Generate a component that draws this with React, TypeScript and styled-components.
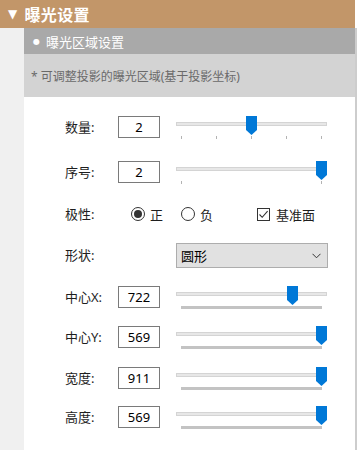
import React from "react";
import styled, {createGlobalStyle} from "styled-components";

type TickKind = "five" | "ends" | "dense"

type SliderProps = {
    value: number
    max: number
    min?: number
    ticks: TickKind
}

const GlobalStyle = createGlobalStyle`
  html, body {
    margin: 0;
    padding: 0;
    background: #fff;
  }
  body {
    font-family: "Noto Sans", "Noto Sans CJK SC", sans-serif;
  }
`

const TRACK_RUN = 140

const tickPositions = (kind: TickKind) => {
    if (kind === "five") return [0, 35, 70, 105, 140]
    if (kind === "ends") return [0, 140]
    return []
}

const Slider = ({value, min = 0, max, ticks}: SliderProps) => {
    const frac = (value - min) / (max - min)
    return (
        <SliderBox>
            <Track/>
            <Thumb style={{left: `${Math.round(frac * TRACK_RUN)}px`}}>
                <svg width="11" height="19" viewBox="0 0 11 19">
                    <path d="M0 0 H11 V14 L5.5 19 L0 14 Z" fill="#0078d7"/>
                </svg>
            </Thumb>
            {ticks === "dense"
                ? <TickBar/>
                : tickPositions(ticks).map(x => <Tick key={x} style={{left: `${x + 5}px`}}/>)}
        </SliderBox>
    )
}

const NumberRow = ({label, value, height, slider}: {
    label: string
    value: number
    height: number
    slider: SliderProps
}) => (
    <Row $height={height}>
        <Label>{label}</Label>
        <NumBox value={String(value)} readOnly/>
        <Slider {...slider}/>
    </Row>
)

export default function App() {
    return (
        <Page>
            <GlobalStyle/>
            <Header>
                <Triangle>▼</Triangle>
                曝光设置
            </Header>
            <Body>
                <Gutter/>
                <Panel>
                    <SubHeader>
                        <Bullet>●</Bullet>
                        曝光区域设置
                    </SubHeader>
                    <Note>* 可调整投影的曝光区域(基于投影坐标)</Note>
                    <Content>
                        <NumberRow label="数量:" value={2} height={45}
                                   slider={{value: 2, min: 0, max: 4, ticks: "five"}}/>
                        <NumberRow label="序号:" value={2} height={42}
                                   slider={{value: 2, min: 1, max: 2, ticks: "ends"}}/>
                        <Row $height={40}>
                            <Label>极性:</Label>
                            <Option $offset={13}>
                                <Radio $checked/>
                                正
                            </Option>
                            <Option $offset={18}>
                                <Radio $checked={false}/>
                                负
                            </Option>
                            <Option $offset={44}>
                                <Check>
                                    <svg width="11" height="11" viewBox="0 0 11 11">
                                        <path d="M1.5 5.5 L4.2 8.3 L9.6 2.2" fill="none" stroke="#333" strokeWidth="1.1"/>
                                    </svg>
                                </Check>
                                基准面
                            </Option>
                        </Row>
                        <Row $height={43}>
                            <Label $tall>形状:</Label>
                            <Select>
                                圆形
                                <svg width="9" height="6" viewBox="0 0 9 6">
                                    <path d="M0.5 0.8 L4.5 4.8 L8.5 0.8" fill="none" stroke="#333" strokeWidth="1"/>
                                </svg>
                            </Select>
                        </Row>
                        <NumberRow label="中心X:" value={722} height={40}
                                   slider={{value: 722, max: 911, ticks: "dense"}}/>
                        <NumberRow label="中心Y:" value={569} height={41}
                                   slider={{value: 569, max: 569, ticks: "dense"}}/>
                        <NumberRow label="宽度:" value={911} height={39}
                                   slider={{value: 911, max: 911, ticks: "dense"}}/>
                        <NumberRow label="高度:" value={569} height={39}
                                   slider={{value: 569, max: 569, ticks: "dense"}}/>
                    </Content>
                </Panel>
            </Body>
        </Page>
    )
}

const Page = styled.div`
  width: 357px;
  min-height: 100vh;
  display: flex;
  flex-direction: column;
`
const Header = styled.div`
  width: 355px;
  height: 28px;
  box-sizing: border-box;
  padding-left: 8px;
  display: flex;
  align-items: center;
  background: #c29669;
  color: #fff;
  font-family: "Noto Sans CJK SC", sans-serif;
  font-size: 16px;
  font-weight: 700;
  letter-spacing: 0.3px;
`
const Triangle = styled.span`
  font-family: "DejaVu Sans", sans-serif;
  font-size: 12px;
  margin-right: 7px;
`
const Body = styled.div`
  flex: 1;
  display: flex;
`
const Gutter = styled.div`
  width: 24px;
  background: #f0f0f0;
`
const Panel = styled.div`
  flex: 1;
  border-right: 2px solid #cdcdcd;
  background: #fff;
`
const SubHeader = styled.div`
  height: 26px;
  box-sizing: border-box;
  padding-left: 9px;
  display: flex;
  align-items: center;
  background: #a9a9a9;
  color: #fff;
  font-family: "Noto Sans CJK SC", sans-serif;
  font-size: 13px;
`
const Bullet = styled.span`
  font-family: "DejaVu Sans", sans-serif;
  font-size: 8px;
  margin-right: 6px;
`
const Note = styled.div`
  height: 43px;
  box-sizing: border-box;
  padding-left: 7px;
  display: flex;
  align-items: center;
  background: #d3d3d3;
  color: #6a6a6a;
  font-family: "Noto Sans", "Noto Sans CJK SC", sans-serif;
  font-size: 12px;
`
const Content = styled.div`
  padding: 19px 0 0 41px;
  display: flex;
  flex-direction: column;
`
const Row = styled.div<{ $height: number }>`
  height: ${p => p.$height}px;
  display: flex;
  align-items: flex-start;
`
const Label = styled.div<{ $tall?: boolean }>`
  width: 53px;
  line-height: ${p => p.$tall ? 25 : 22}px;
  font-family: "Noto Sans", "Noto Sans CJK SC", sans-serif;
  font-size: 13px;
  color: #1e1e1e;
`
const NumBox = styled.input`
  width: 42px;
  height: 22px;
  box-sizing: border-box;
  margin: 0 16px 0 0;
  padding: 0;
  border: 1px solid #7a7a7a;
  border-radius: 0;
  outline: none;
  text-align: center;
  font-family: "Noto Sans", sans-serif;
  font-size: 13px;
  color: #000;
  background: #fff;
`
const SliderBox = styled.div`
  position: relative;
  width: 151px;
  height: 24px;
`
const Track = styled.div`
  position: absolute;
  top: 6px;
  left: 0;
  width: 151px;
  height: 4px;
  box-sizing: border-box;
  background: #e7e7e7;
  border: 1px solid #d4d4d4;
`
const Thumb = styled.div`
  position: absolute;
  top: 0;
  width: 11px;
  height: 19px;
  line-height: 0;
`
const Tick = styled.div`
  position: absolute;
  top: 20px;
  width: 1px;
  height: 3px;
  background: #b3b3b3;
`
const TickBar = styled.div`
  position: absolute;
  top: 20px;
  left: 5px;
  width: 141px;
  height: 3px;
  background: #c3c3c3;
`
const Option = styled.div<{ $offset: number }>`
  margin-left: ${p => p.$offset}px;
  height: 22px;
  display: flex;
  align-items: center;
  gap: 5px;
  font-family: "Noto Sans CJK SC", sans-serif;
  font-size: 13px;
  color: #1e1e1e;
`
const Radio = styled.span<{ $checked: boolean }>`
  width: 14px;
  height: 14px;
  box-sizing: border-box;
  border: 1px solid #333;
  border-radius: 50%;
  display: flex;
  align-items: center;
  justify-content: center;

  &::after {
    content: "";
    display: ${p => p.$checked ? "block" : "none"};
    width: 8px;
    height: 8px;
    border-radius: 50%;
    background: #333;
  }
`
const Check = styled.span`
  width: 13px;
  height: 13px;
  box-sizing: border-box;
  border: 1px solid #333;
  display: flex;
  align-items: center;
  justify-content: center;
  margin-right: 1px;
`
const Select = styled.div`
  width: 152px;
  height: 25px;
  box-sizing: border-box;
  margin-left: 58px;
  padding: 0 6px 0 4px;
  display: flex;
  align-items: center;
  justify-content: space-between;
  background: #e1e1e1;
  border: 1px solid #adadad;
  font-family: "Noto Sans CJK SC", sans-serif;
  font-size: 13px;
  color: #000;
`
